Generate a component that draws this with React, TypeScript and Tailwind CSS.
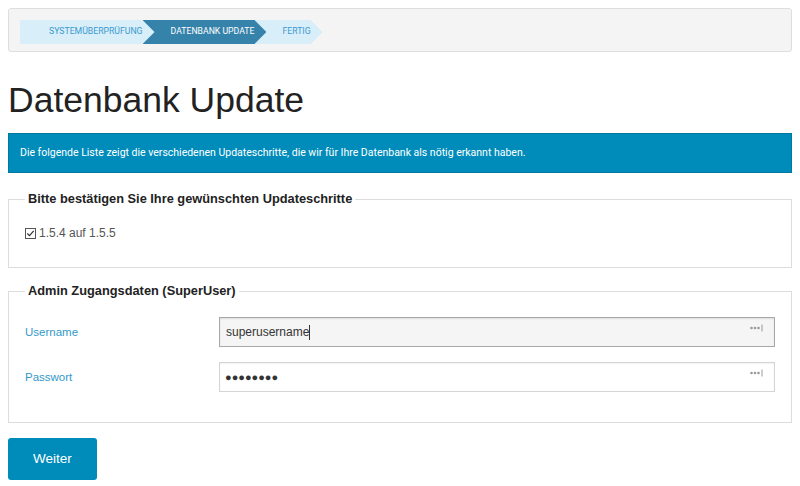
import React from 'react';

const steps = [
  { label: 'Systemüberprüfung', active: false },
  { label: 'Datenbank Update', active: true },
  { label: 'Fertig', active: false },
];

const arrow = { clipPath: 'polygon(0 0, calc(100% - 12px) 0, 100% 50%, calc(100% - 12px) 100%, 0 100%)' };

const PwIcon = () => (
  <svg width="14" height="8" viewBox="0 0 14 8" className="absolute right-[10px] top-[6px]">
    <circle cx="1.5" cy="4" r="1.3" fill="#9a9a9a" />
    <circle cx="5" cy="4" r="1.3" fill="#9a9a9a" />
    <circle cx="8.5" cy="4" r="1.3" fill="#9a9a9a" />
    <rect x="11.5" y="0.5" width="1" height="7" fill="#9a9a9a" />
  </svg>
);

export default function App() {
  return (
    <div className="min-h-screen bg-white p-2 font-['Liberation_Sans',Arial,sans-serif] text-[#222]">
      {/* Schritte */}
      <div className="h-[44px] rounded-[3px] border border-[#dedede] bg-[#f4f4f4] pl-[11px] pt-[11px]">
        <div className="flex">
          {steps.map((s, i) => (
            <div
              key={s.label}
              style={{ ...arrow, zIndex: 10 - i }}
              className={`relative flex h-[24px] items-center pr-[12px] font-['Roboto',sans-serif] text-[8.7px] uppercase ${
                i > 0 ? '-ml-[12px] pl-[28px]' : 'pl-[29px]'
              } ${s.active ? 'bg-[#3583ab] text-white' : 'bg-[#d8eef9] text-[#3a9bd0]'}`}
            >
              {s.label}
            </div>
          ))}
        </div>
      </div>

      <h1 className="mt-[27px] mb-[11px] text-[35.5px] leading-[43px] text-[#222]">Datenbank Update</h1>

      <div className="flex h-[40px] items-center border border-[#0079a1] bg-[#008cba] px-[11px] font-['Roboto',sans-serif] text-[10.5px] text-white">
        Die folgende Liste zeigt die verschiedenen Updateschritte, die wir für Ihre Datenbank als nötig erkannt haben.
      </div>

      <fieldset className="mt-[18px] border border-[#ddd] px-4 pt-[19px] pb-[27px]">
        <legend className="px-[3px] text-[12.8px] leading-[16px] font-bold text-[#222]">
          Bitte bestätigen Sie Ihre gewünschten Updateschritte
        </legend>
        <label className="flex items-center gap-[2px] text-[12px] leading-[14px] text-[#555]">
          <svg width="11" height="11" viewBox="0 0 11 11">
            <rect x="0.5" y="0.5" width="10" height="10" fill="#fff" stroke="#555" />
            <path d="M2.3 5.5 L4.5 7.7 L8.7 2.8" fill="none" stroke="#333" strokeWidth="1.2" />
          </svg>
          <span className="ml-[1px]">1.5.4 auf 1.5.5</span>
        </label>
      </fieldset>

      <fieldset className="mt-[15px] border border-[#ddd] px-4 pt-[18px] pb-[30px]">
        <legend className="px-[3px] text-[12.8px] leading-[16px] font-bold text-[#222]">
          Admin Zugangsdaten (SuperUser)
        </legend>
        <div className="flex flex-col gap-[15px]">
          <div className="flex items-center">
            <label className="w-[194px] pt-[2px] text-[11.5px] text-[#3399cc]">Username</label>
            <div className="relative flex h-[30px] flex-1 items-center border border-[#a8a8a8] bg-[#f5f5f5] pl-[6px] text-[12px] text-[#333] shadow-[inset_0_1px_2px_rgba(0,0,0,0.1)]">
              <span>superusername</span>
              <span className="h-[15px] w-px bg-[#333]" />
              <PwIcon />
            </div>
          </div>
          <div className="flex items-center">
            <label className="w-[194px] pt-[2px] text-[11.5px] text-[#3399cc]">Passwort</label>
            <div className="relative flex h-[30px] flex-1 items-center border border-[#d4d4d4] bg-white pl-[5px] text-[#333] shadow-[inset_0_1px_2px_rgba(0,0,0,0.06)]">
              <span className="text-[11px]">●●●●●●●●</span>
              <PwIcon />
            </div>
          </div>
        </div>
      </fieldset>

      <button className="mt-[15px] h-[42px] w-[89px] rounded-[3px] bg-[#008cba] text-[13.5px] text-white">
        Weiter
      </button>
    </div>
  );
}
